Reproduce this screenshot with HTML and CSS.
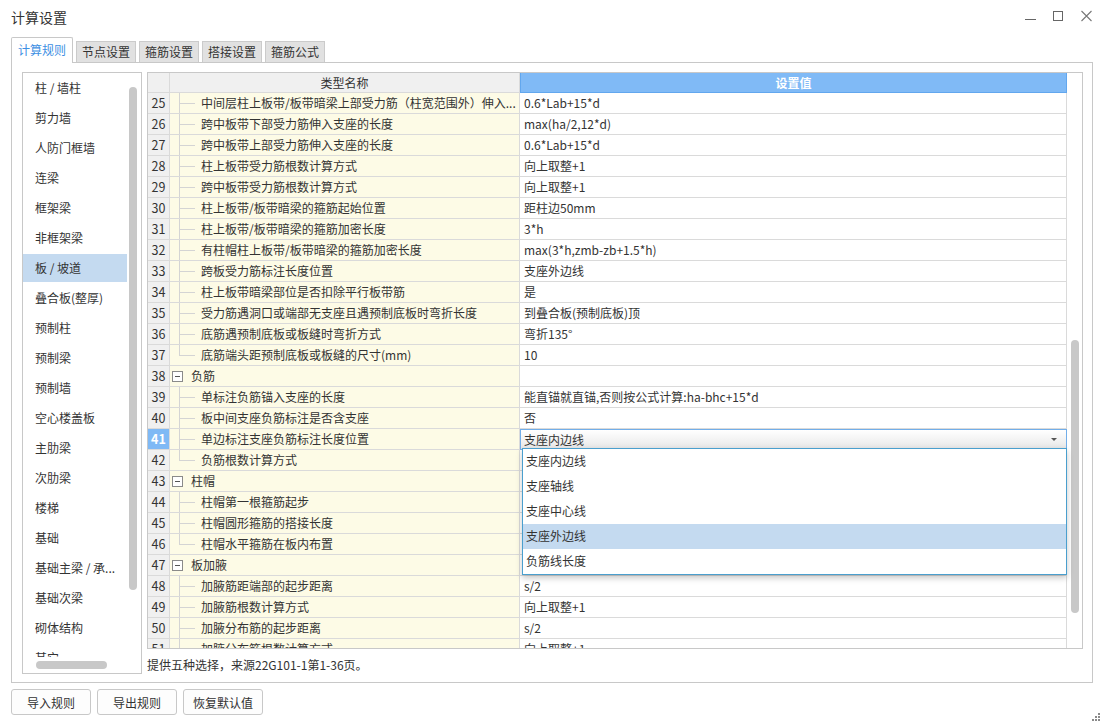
FILE: index.html
```html
<!DOCTYPE html>
<html lang="zh-CN">
<head>
<meta charset="utf-8">
<title>计算设置</title>
<link rel="stylesheet" href="styles.css">
</head>
<body>
<div class="win">
  <div class="titlebar">
    <span class="title">计算设置</span>
    <div class="ctrls">
      <span class="ctrl"><svg width="28" height="34" viewBox="0 0 28 34"><line x1="9" y1="19.5" x2="20" y2="19.5" stroke="#666" stroke-width="1"/></svg></span>
      <span class="ctrl"><svg width="28" height="34" viewBox="0 0 28 34"><rect x="9.5" y="11.5" width="9" height="9" fill="none" stroke="#666" stroke-width="1"/></svg></span>
      <span class="ctrl"><svg width="28" height="34" viewBox="0 0 28 34"><path d="M9.5 11 L19.5 21 M19.5 11 L9.5 21" stroke="#777" stroke-width="1.1" fill="none"/></svg></span>
    </div>
  </div>

  <div class="tabs">
    <div class="tab active">计算规则</div>
    <div class="tab">节点设置</div>
    <div class="tab">箍筋设置</div>
    <div class="tab">搭接设置</div>
    <div class="tab">箍筋公式</div>
  </div>

  <div class="panel">
    <div class="sidebar">
      <div class="side-view">
        <ul class="side-list">
          <li>柱 / 墙柱</li>
          <li>剪力墙</li>
          <li>人防门框墙</li>
          <li>连梁</li>
          <li>框架梁</li>
          <li>非框架梁</li>
          <li class="sel">板 / 坡道</li>
          <li>叠合板(整厚)</li>
          <li>预制柱</li>
          <li>预制梁</li>
          <li>预制墙</li>
          <li>空心楼盖板</li>
          <li>主肋梁</li>
          <li>次肋梁</li>
          <li>楼梯</li>
          <li>基础</li>
          <li>基础主梁 / 承...</li>
          <li>基础次梁</li>
          <li>砌体结构</li>
          <li>其它</li>
        </ul>
        <div class="side-vscroll"><div class="thumb-v"></div></div>
      </div>
      <div class="side-hscroll"><div class="thumb-h"></div></div>
    </div>

    <div class="main">
      <div class="grid">
        <div class="grid-body">
          <div class="row head">
            <div class="c num"></div>
            <div class="c hname">类型名称</div>
            <div class="c hval">设置值</div>
          </div>

          <div class="row"><div class="c num">25</div><div class="c name child">中间层柱上板带/板带暗梁上部受力筋（柱宽范围外）伸入...</div><div class="c val">0.6*Lab+15*d</div></div>
          <div class="row"><div class="c num">26</div><div class="c name child">跨中板带下部受力筋伸入支座的长度</div><div class="c val">max(ha/2,12*d)</div></div>
          <div class="row"><div class="c num">27</div><div class="c name child">跨中板带上部受力筋伸入支座的长度</div><div class="c val">0.6*Lab+15*d</div></div>
          <div class="row"><div class="c num">28</div><div class="c name child">柱上板带受力筋根数计算方式</div><div class="c val">向上取整+1</div></div>
          <div class="row"><div class="c num">29</div><div class="c name child">跨中板带受力筋根数计算方式</div><div class="c val">向上取整+1</div></div>
          <div class="row"><div class="c num">30</div><div class="c name child">柱上板带/板带暗梁的箍筋起始位置</div><div class="c val">距柱边50mm</div></div>
          <div class="row"><div class="c num">31</div><div class="c name child">柱上板带/板带暗梁的箍筋加密长度</div><div class="c val">3*h</div></div>
          <div class="row"><div class="c num">32</div><div class="c name child">有柱帽柱上板带/板带暗梁的箍筋加密长度</div><div class="c val">max(3*h,zmb-zb+1.5*h)</div></div>
          <div class="row"><div class="c num">33</div><div class="c name child">跨板受力筋标注长度位置</div><div class="c val">支座外边线</div></div>
          <div class="row"><div class="c num">34</div><div class="c name child">柱上板带暗梁部位是否扣除平行板带筋</div><div class="c val">是</div></div>
          <div class="row"><div class="c num">35</div><div class="c name child">受力筋遇洞口或端部无支座且遇预制底板时弯折长度</div><div class="c val">到叠合板(预制底板)顶</div></div>
          <div class="row"><div class="c num">36</div><div class="c name child">底筋遇预制底板或板缝时弯折方式</div><div class="c val">弯折135°</div></div>
          <div class="row"><div class="c num">37</div><div class="c name child last">底筋端头距预制底板或板缝的尺寸(mm)</div><div class="c val">10</div></div>
          <div class="row"><div class="c num">38</div><div class="c name group"><span class="tog"></span>负筋</div><div class="c val"></div></div>
          <div class="row"><div class="c num">39</div><div class="c name child">单标注负筋锚入支座的长度</div><div class="c val">能直锚就直锚,否则按公式计算:ha-bhc+15*d</div></div>
          <div class="row"><div class="c num">40</div><div class="c name child">板中间支座负筋标注是否含支座</div><div class="c val">否</div></div>
          <div class="row"><div class="c num cur">41</div><div class="c name child">单边标注支座负筋标注长度位置</div><div class="c val combo"><span>支座内边线</span><span class="arrow"></span></div></div>
          <div class="row"><div class="c num">42</div><div class="c name child last">负筋根数计算方式</div><div class="c val"></div></div>
          <div class="row"><div class="c num">43</div><div class="c name group"><span class="tog"></span>柱帽</div><div class="c val"></div></div>
          <div class="row"><div class="c num">44</div><div class="c name child">柱帽第一根箍筋起步</div><div class="c val"></div></div>
          <div class="row"><div class="c num">45</div><div class="c name child">柱帽圆形箍筋的搭接长度</div><div class="c val"></div></div>
          <div class="row"><div class="c num">46</div><div class="c name child last">柱帽水平箍筋在板内布置</div><div class="c val"></div></div>
          <div class="row"><div class="c num">47</div><div class="c name group"><span class="tog"></span>板加腋</div><div class="c val"></div></div>
          <div class="row"><div class="c num">48</div><div class="c name child">加腋筋距端部的起步距离</div><div class="c val">s/2</div></div>
          <div class="row"><div class="c num">49</div><div class="c name child">加腋筋根数计算方式</div><div class="c val">向上取整+1</div></div>
          <div class="row"><div class="c num">50</div><div class="c name child">加腋分布筋的起步距离</div><div class="c val">s/2</div></div>
          <div class="row"><div class="c num">51</div><div class="c name child">加腋分布筋根数计算方式</div><div class="c val">向上取整+1</div></div>
        </div>
        <div class="grid-vscroll"><div class="thumb-gv"></div></div>

        <ul class="dropdown">
          <li>支座内边线</li>
          <li>支座轴线</li>
          <li>支座中心线</li>
          <li class="hl">支座外边线</li>
          <li>负筋线长度</li>
        </ul>
      </div>
      <div class="hint">提供五种选择，来源22G101-1第1-36页。</div>
    </div>
  </div>

  <div class="buttons">
    <button class="btn">导入规则</button>
    <button class="btn">导出规则</button>
    <button class="btn">恢复默认值</button>
  </div>

  <svg class="grip" width="10" height="10" viewBox="0 0 10 10">
    <rect x="7" y="0" width="2" height="2" fill="#8a8a8a"/>
    <rect x="4" y="3" width="2" height="2" fill="#8a8a8a"/>
    <rect x="7" y="3" width="2" height="2" fill="#8a8a8a"/>
    <rect x="1" y="6" width="2" height="2" fill="#8a8a8a"/>
    <rect x="4" y="6" width="2" height="2" fill="#8a8a8a"/>
    <rect x="7" y="6" width="2" height="2" fill="#8a8a8a"/>
  </svg>
</div>
</body>
</html>
```

FILE: styles.css
```css
* { box-sizing: border-box; margin: 0; padding: 0; }

html, body {
  width: 1103px;
  height: 726px;
  overflow: hidden;
  background: #fff;
}

body {
  font-family: "Noto Sans CJK SC", "Microsoft YaHei", "Noto Sans", sans-serif;
  font-size: 12px;
  color: #333;
}

.win {
  position: relative;
  width: 1103px;
  height: 726px;
  display: flex;
  flex-direction: column;
}

/* title bar */
.titlebar {
  height: 34px;
  display: flex;
  align-items: center;
  justify-content: space-between;
  padding-left: 11px;
  padding-right: 3px;
}
.title { font-size: 14px; color: #333; }
.ctrls { display: flex; align-self: stretch; }
.ctrl { width: 28px; height: 34px; display: block; }
.ctrl svg { display: block; }

/* tabs */
.tabs {
  display: flex;
  align-items: flex-end;
  gap: 3px;
  height: 25px;
  margin-top: 3px;
  padding-left: 11px;
}
.tab {
  height: 21px;
  line-height: 19px;
  padding: 0 5px;
  background: #e1e1e1;
  border: 1px solid #cbcbcb;
  border-bottom: none;
  color: #333;
  white-space: nowrap;
}
.tab.active {
  position: relative;
  z-index: 1;
  height: 26px;
  margin-bottom: -1px;
  line-height: 24px;
  padding: 0 6px;
  background: #fff;
  color: #3d8fe3;
  border-radius: 2px 2px 0 0;
  border-color: #c8c8c8;
}

/* panel */
.panel {
  margin: 0 10px 0 11px;
  height: 621px;
  border: 1px solid #c8c8c8;
  padding: 9px 9px 8px 10px;
  display: flex;
  gap: 5px;
}

/* sidebar */
.sidebar {
  width: 120px;
  height: 100%;
  border: 1px solid #c8c8c8;
  display: flex;
  flex-direction: column;
}
.side-view {
  height: 584px;
  display: flex;
  overflow: hidden;
}
.side-list {
  list-style: none;
  width: 104px;
  padding-top: 1px;
}
.side-list li {
  height: 28px;
  line-height: 28px;
  margin-bottom: 2px;
  padding-left: 12px;
  white-space: nowrap;
  overflow: hidden;
  color: #333;
}
.side-list li.sel { background: #c4daf0; }
.side-vscroll { width: 14px; padding-left: 2px; }
.thumb-v {
  width: 8px;
  height: 503px;
  margin-top: 14px;
  background: #c8c8c8;
  border-radius: 4px;
}
.side-hscroll { height: 16px; padding-left: 13px; padding-top: 4px; }
.thumb-h {
  width: 71px;
  height: 8px;
  background: #c8c8c8;
  border-radius: 4px;
}

/* main */
.main {
  width: 936px;
  display: flex;
  flex-direction: column;
}
.grid {
  position: relative;
  height: 577px;
  border: 1px solid #c8c8c8;
  display: flex;
}
.grid-body {
  width: 919px;
  overflow: hidden;
}
.grid-vscroll { width: 15px; padding-left: 4px; }
.thumb-gv {
  width: 8px;
  height: 273px;
  margin-top: 267px;
  background: #c8c8c8;
  border-radius: 4px;
}

.row {
  display: grid;
  grid-template-columns: 22px 350px 547px;
  height: 21px;
}
.c {
  height: 21px;
  line-height: 20px;
  border-right: 1px solid #dadada;
  border-bottom: 1px solid #dadada;
  white-space: nowrap;
  overflow: hidden;
}
.num {
  background: #f0f0f0;
  text-align: center;
  font-size: 12.5px;
  color: #333;
}
.num.cur {
  background: #7fb9f5;
  color: #fff;
  font-weight: bold;
}
.row.head { height: 20px; }
.row.head .c { height: 20px; line-height: 19px; }
.hname { background: #f0f0f0; text-align: center; }
.hval {
  background: #80baf6;
  border: 1px solid #62a7ee;
  border-top: none;
  color: #fff;
  font-weight: bold;
  text-align: center;
}

.name { background: #fdfbe6; }
.name.child {
  padding-left: 31px;
  background-color: #fdfbe6;
  background-image: linear-gradient(#d4d4d4, #d4d4d4), linear-gradient(#d4d4d4, #d4d4d4);
  background-repeat: no-repeat;
  background-size: 1px 100%, 16px 1px;
  background-position: 9px 0, 9px 10px;
}
.name.child.last {
  background-size: 1px 11px, 16px 1px;
}
.name.group {
  display: flex;
  align-items: center;
  padding-left: 2px;
  gap: 8px;
}
.tog {
  width: 11px;
  height: 11px;
  border: 1px solid #8a8a8a;
  background: #fff linear-gradient(#555, #555) no-repeat center / 5px 1px;
}
.val { padding-left: 4px; background: #fff; }
.combo {
  display: flex;
  align-items: center;
  justify-content: space-between;
  padding: 0 9px 0 3px;
  border: 1px solid #72aee9;
  background: linear-gradient(#ffffff, #f1f1f1 60%, #e6e6e6);
  line-height: 18px;
}
.arrow {
  width: 0;
  height: 0;
  border-left: 3px solid transparent;
  border-right: 3px solid transparent;
  border-top: 3px solid #555;
}

/* dropdown popup */
.dropdown {
  position: absolute;
  left: 374px;
  top: 375px;
  width: 545px;
  list-style: none;
  background: #fff;
  border: 1px solid #4a9fce;
  box-shadow: 0 3px 6px rgba(0, 0, 0, 0.22);
  z-index: 5;
}
.dropdown li {
  height: 25px;
  line-height: 24px;
  padding-left: 3px;
  color: #333;
}
.dropdown li.hl { background: #c4daf0; }

.hint {
  margin-top: 8px;
  line-height: 16px;
  color: #333;
}

/* buttons */
.buttons {
  display: flex;
  gap: 6px;
  margin-top: 6px;
  padding-left: 11px;
}
.btn {
  width: 80px;
  height: 26px;
  border: 1px solid #c8c8c8;
  border-radius: 3px;
  background: #fdfdfd;
  font-family: inherit;
  font-size: 12px;
  color: #333;
}

.grip {
  position: absolute;
  right: 2px;
  bottom: 3px;
}
```
